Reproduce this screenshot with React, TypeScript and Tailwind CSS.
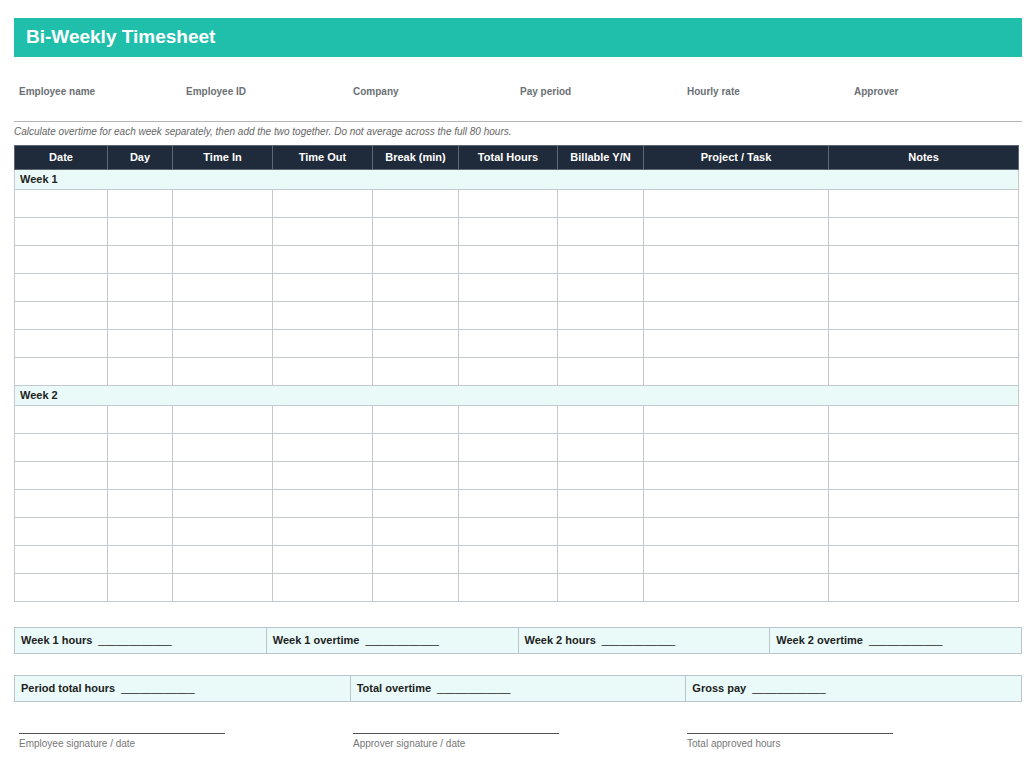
const cols = [93, 65, 100, 100, 86, 99, 86, 185, 190];
const heads = ["Date", "Day", "Time In", "Time Out", "Break (min)", "Total Hours", "Billable Y/N", "Project / Task", "Notes"];
const meta = ["Employee name", "Employee ID", "Company", "Pay period", "Hourly rate", "Approver"];

function WeekRows({ label }: { label: string }) {
  return (
    <>
      <tr className="bg-[#e9faf8]">
        <td colSpan={9} className="border border-[#c3c9cf] h-[20px] px-[5px] text-[11px] font-bold text-[#222]">{label}</td>
      </tr>
      {Array.from({ length: 7 }).map((_, r) => (
        <tr key={r}>
          {cols.map((_, c) => (
            <td key={c} className="border border-[#c3c9cf] h-[28px]" />
          ))}
        </tr>
      ))}
    </>
  );
}

function Cell({ label, last }: { label: string; last?: boolean }) {
  return (
    <div className={`flex-1 px-[6px] flex items-center text-[11px] font-bold text-[#222] ${last ? "" : "border-r border-[#bcc3c9]"}`}>
      {label}<span className="ml-[6px] font-normal">____________</span>
    </div>
  );
}

export default function App() {
  return (
    <div className="w-[1036px] h-[757px] bg-white px-[14px] pt-[18px]" style={{ fontFamily: '"Liberation Sans", Arial, sans-serif' }}>
      <div className="h-[39px] bg-[#20bfab] flex items-center px-[12px]">
        <h1 className="text-white text-[19px] font-bold">Bi-Weekly Timesheet</h1>
      </div>
      <div className="flex h-[65px] border-b border-[#b5b5b5] pl-[5px]">
        {meta.map((m) => (
          <div key={m} className="w-[167px] pt-[27px] text-[10px] font-bold text-[#6b7075]">{m}</div>
        ))}
      </div>
      <p className="text-[10px] italic text-[#666] mt-[2px] mb-[6px]">
        Calculate overtime for each week separately, then add the two together. Do not average across the full 80 hours.
      </p>
      <table className="border-collapse w-[1004px] table-fixed">
        <colgroup>
          {cols.map((w, i) => <col key={i} style={{ width: w }} />)}
        </colgroup>
        <thead>
          <tr className="bg-[#1f2a3a]">
            {heads.map((h) => (
              <th key={h} className="border border-[#5d6673] h-[24px] text-white text-[11px] font-bold text-center">{h}</th>
            ))}
          </tr>
        </thead>
        <tbody>
          <WeekRows label="Week 1" />
          <WeekRows label="Week 2" />
        </tbody>
      </table>
      <div className="mt-[25px] h-[27px] flex border border-[#bcc3c9] bg-[#e9faf8]">
        <Cell label="Week 1 hours" />
        <Cell label="Week 1 overtime" />
        <Cell label="Week 2 hours" />
        <Cell label="Week 2 overtime" last />
      </div>
      <div className="mt-[21px] h-[27px] flex border border-[#bcc3c9] bg-[#e9faf8]">
        <Cell label="Period total hours" />
        <Cell label="Total overtime" />
        <Cell label="Gross pay" last />
      </div>
      <div className="flex mt-[31px] pl-[5px]">
        {["Employee signature / date", "Approver signature / date", "Total approved hours"].map((s) => (
          <div key={s} className="w-[334px]">
            <div className="w-[206px] border-t border-[#555]" />
            <div className="text-[10px] text-[#777] mt-[2px]">{s}</div>
          </div>
        ))}
      </div>
    </div>
  );
}
